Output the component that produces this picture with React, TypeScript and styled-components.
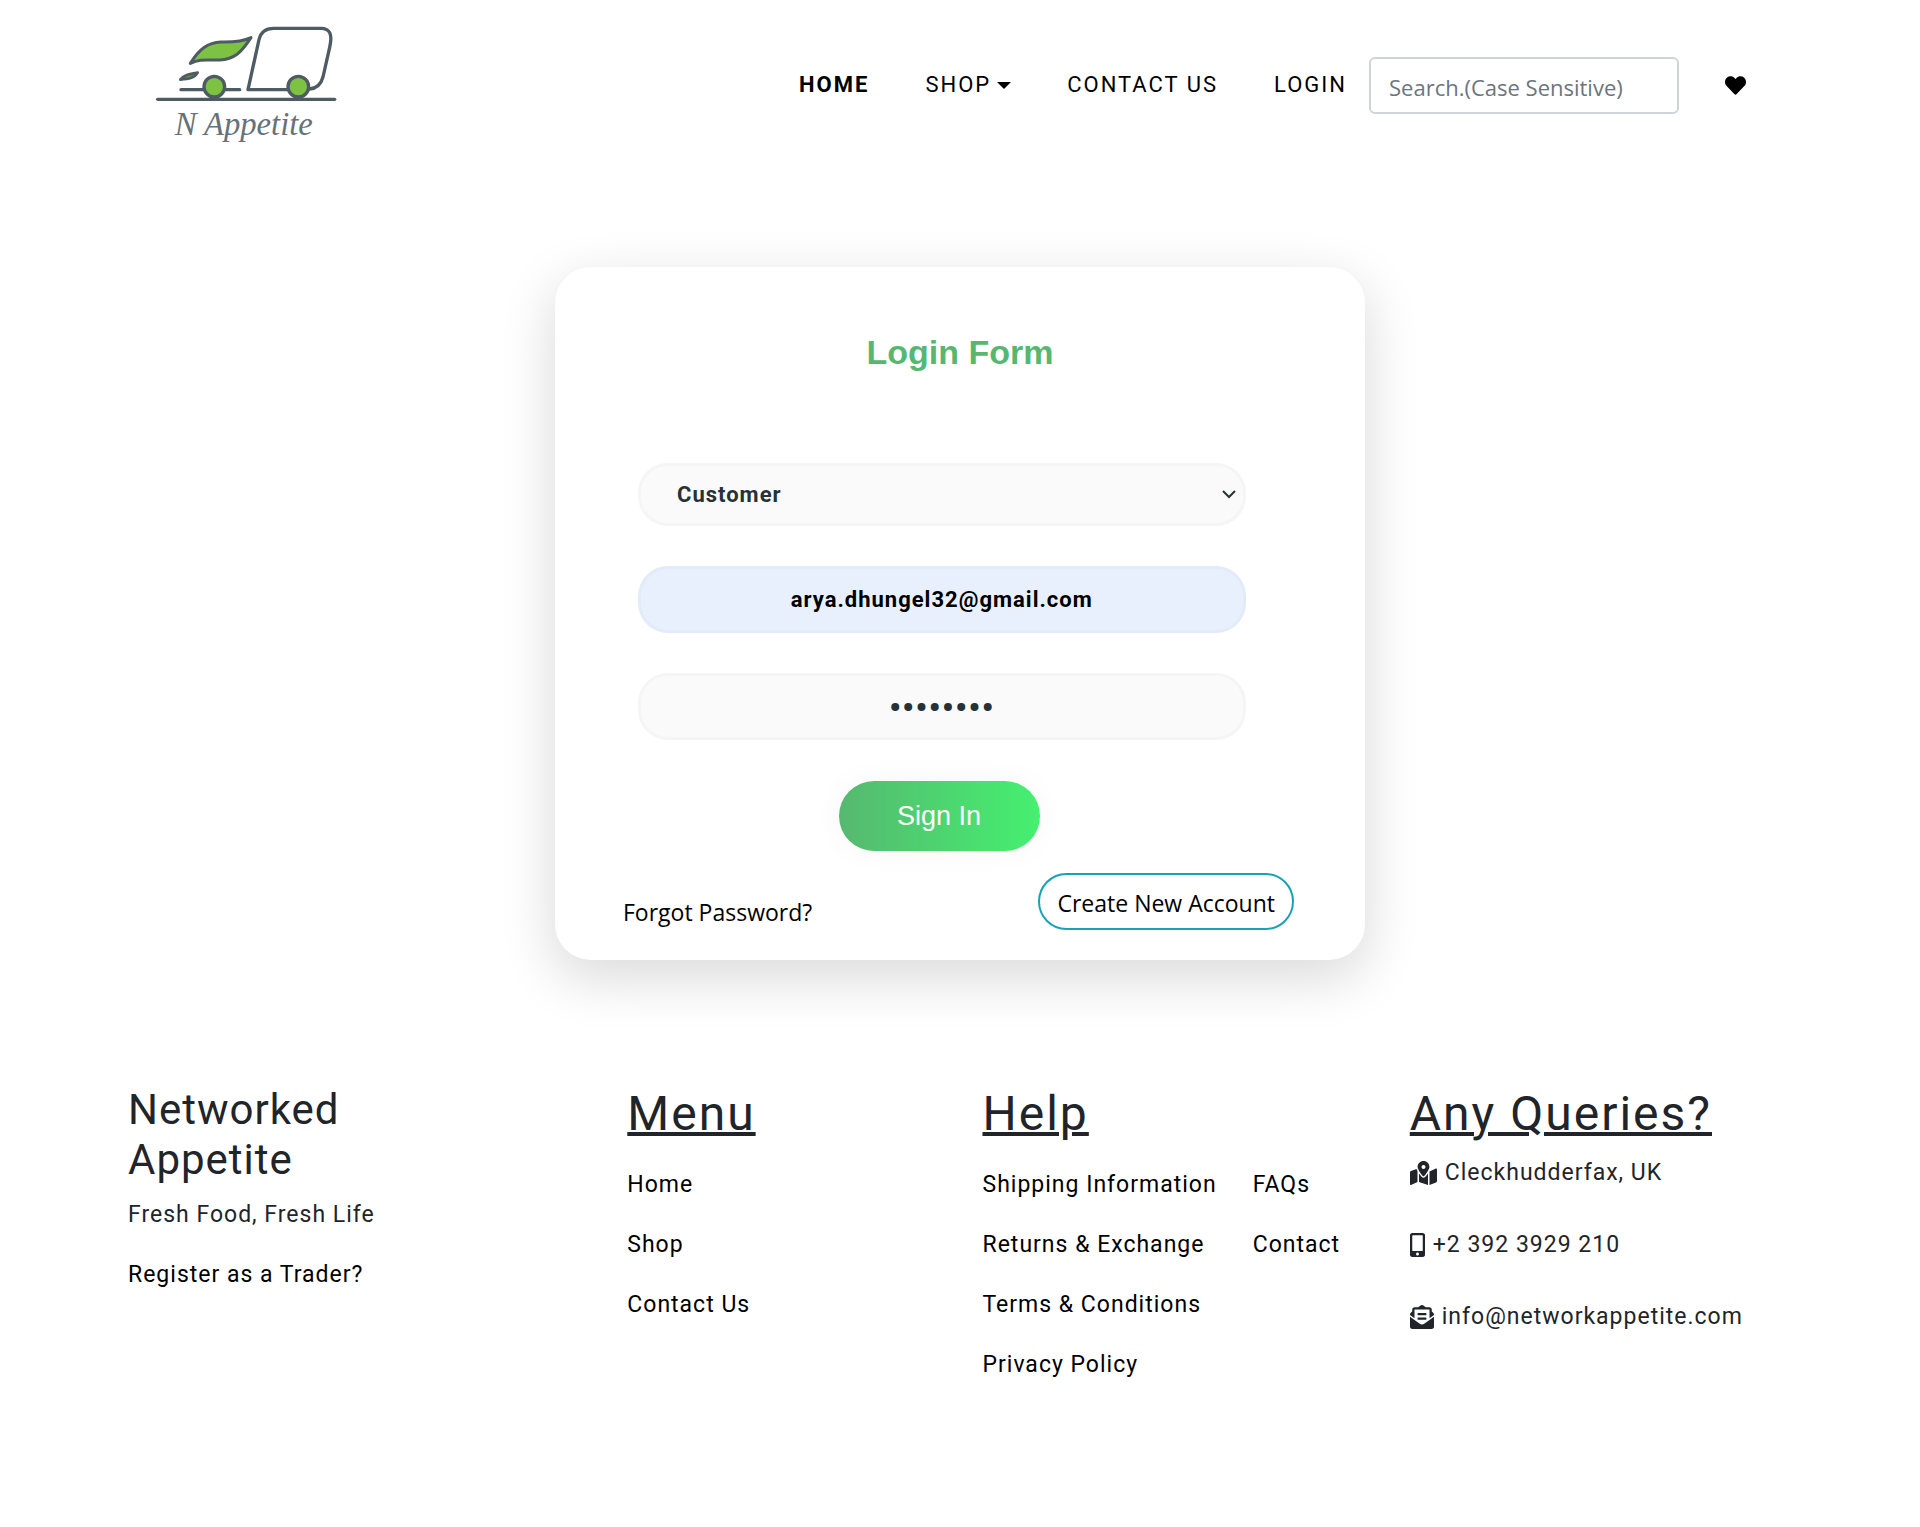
import React, { useState } from "react";
import styled, { createGlobalStyle } from "styled-components";
import {
  FaEnvelopeOpenText,
  FaHeart,
  FaMapMarkedAlt,
  FaMobileAlt,
} from "react-icons/fa";

const displayFont = `Roboto, "Liberation Sans", sans-serif`;
const uiFont = `"Open Sans", "Noto Sans", sans-serif`;
const plainFont = `"Liberation Sans", Arial, sans-serif`;

const GlobalStyle = createGlobalStyle`
  *, *::before, *::after { box-sizing: border-box; }
  body {
    margin: 0;
    background: #fff;
    color: #212529;
    font-family: ${displayFont};
    font-size: 23px;
    line-height: 36px;
    letter-spacing: 1px;
  }
  a { color: #000; text-decoration: none; }
  ul { margin: 0; padding: 0; list-style: none; }
`;

const Header = styled.header`
  display: flex;
  align-items: center;
  justify-content: space-between;
  padding: 10px 174px 10px 140px;
`;

const LogoLink = styled.a`
  display: block;
  svg { display: block; }
`;

const HeaderRight = styled.div`
  display: flex;
  align-items: center;
`;

const NavList = styled.ul`
  display: flex;
  gap: 56px;
`;

const NavLink = styled.a<{ $active?: boolean }>`
  display: flex;
  align-items: center;
  font-size: 22px;
  letter-spacing: 2px;
  text-transform: uppercase;
  font-weight: ${(p) => (p.$active ? 700 : 400)};
`;

const Caret = styled.span`
  margin-left: 6px;
  border-top: 7px solid #000;
  border-left: 7px solid transparent;
  border-right: 7px solid transparent;
`;

const SearchInput = styled.input`
  width: 310px;
  height: 57px;
  margin: 0 46px 0 22px;
  padding: 4px 18px 0;
  border: 2px solid #ced4da;
  border-radius: 6px;
  background: #fff;
  font-family: ${uiFont};
  font-size: 22px;
  color: #495057;
  &::placeholder { color: #6c757d; opacity: 1; }
`;

const HeartLink = styled.a`
  display: flex;
  font-size: 21px;
`;

const Card = styled.main`
  max-width: 810px;
  margin: 97px auto 0;
  padding: 64px 0 30px;
  border-radius: 36px;
  background: #fff;
  box-shadow: 0 17px 53px 3px rgba(0, 0, 0, 0.14);
`;

const Title = styled.h1`
  margin: 0 0 90px;
  text-align: center;
  font-family: ${plainFont};
  font-size: 34px;
  line-height: 42px;
  letter-spacing: normal;
  color: #56b870;
`;

const Fields = styled.div`
  display: grid;
  gap: 40px;
  width: 75%;
  margin-left: 83px;
`;

const SelectBox = styled.div`
  display: grid;
  align-items: center;
  > * { grid-area: 1 / 1; }
  svg {
    justify-self: end;
    margin-right: 10px;
    pointer-events: none;
  }
`;

const fieldStyle = `
  width: 100%;
  border: 3px solid rgba(0, 0, 0, 0.02);
  border-radius: 30px;
  font-family: ${displayFont};
  font-weight: 700;
  letter-spacing: 1px;
  outline: none;
`;

const Select = styled.select`
  ${fieldStyle}
  height: 63px;
  padding: 0 36px;
  appearance: none;
  background: #fafafa;
  color: #263238;
  font-size: 22px;
`;

const Input = styled.input<{ $filled?: boolean }>`
  ${fieldStyle}
  height: 67px;
  padding: 0 36px;
  text-align: center;
  background: ${(p) => (p.$filled ? "#e8f0fe" : "#fafafa")};
  color: ${(p) => (p.$filled ? "#000" : "#263238")};
  font-size: ${(p) => (p.type === "password" ? 34 : 22)}px;
`;

const SignIn = styled.button`
  display: block;
  width: 201px;
  height: 70px;
  margin: 41px 0 0 35%;
  padding: 0;
  border: 0;
  border-radius: 36px;
  background: linear-gradient(to right, #56b870, #45f070);
  box-shadow: 0 0 30px 1px rgba(0, 0, 0, 0.04);
  color: #fff;
  font-family: ${plainFont};
  font-size: 27px;
  cursor: pointer;
`;

const CardFooter = styled.div`
  display: flex;
  align-items: flex-end;
  justify-content: space-between;
  margin-top: 22px;
  padding: 0 71px 0 68px;
  font-family: ${uiFont};
  font-size: 23px;
  letter-spacing: normal;
`;

const CreateLink = styled.a`
  padding: 10px 17px 7px;
  border: 2px solid #17a2b8;
  border-radius: 30px;
`;

const Footer = styled.footer`
  display: grid;
  grid-template-columns: 499fr 355fr 427fr 382fr;
  padding: 125px 128px 120px;
`;

const Brand = styled.h3`
  max-width: 320px;
  margin: 0 0 12px;
  font-size: 42px;
  font-weight: 400;
  line-height: 50px;
`;

const Heading = styled.h2`
  margin: 0 0 12px;
  font-size: 48px;
  font-weight: 400;
  line-height: 58px;
  letter-spacing: 2px;
  text-decoration: underline;
  text-decoration-thickness: 4px;
  white-space: nowrap;
`;

const Tagline = styled.p`
  margin: 0 0 24px;
`;

const Lists = styled.div`
  display: flex;
  gap: 36px;
`;

const LinkItem = styled.li`
  padding: 12px 0;
  white-space: nowrap;
`;

const ContactItem = styled.li<{ $iconWidth: number }>`
  display: flex;
  align-items: center;
  gap: 8px;
  margin-bottom: 36px;
  white-space: nowrap;
  svg {
    flex: none;
    width: ${(p) => p.$iconWidth}px;
    height: 24px;
  }
`;

const Logo = () => (
  <svg width="220" height="150" viewBox="0 0 660 450" role="img" aria-label="N Appetite">
    <g stroke="#4f5b63" strokeWidth="10" strokeLinecap="round" strokeLinejoin="round" fill="none">
      <path d="M53 268H584" />
      <path d="M123 239H299" />
      <path d="M509 237C532 235 543 223 549 201L569 112C578 73 570 55 543 55H400C374 55 362 68 357 89L324 239H446" />
      <path d="M151 160C178 116 203 98 243 96C286 97 310 94 333 83C303 129 283 147 239 150C202 151 181 145 151 160Z" fill="#7dc242" strokeWidth="9" />
      <path d="M121 209C134 193 152 192 173 188C163 205 145 207 121 209Z" fill="#639b3c" strokeWidth="8" />
      <circle cx="223" cy="230" r="31" fill="#7dc242" />
      <circle cx="475" cy="230" r="31" fill="#7dc242" />
    </g>
    <text
      x="104"
      y="374"
      fill="#66727a"
      fontFamily="'Liberation Serif', serif"
      fontStyle="italic"
      fontSize="98"
      letterSpacing="0"
    >
      N Appetite
    </text>
  </svg>
);

const LinkList = ({ items }: { items: string[] }) => (
  <ul>
    {items.map((item) => (
      <LinkItem key={item}>
        <a href="#">{item}</a>
      </LinkItem>
    ))}
  </ul>
);

export default function App() {
  const [role, setRole] = useState("Customer");
  const [email, setEmail] = useState("arya.dhungel32@gmail.com");
  const [password, setPassword] = useState("appetite");

  return (
    <>
      <GlobalStyle />
      <Header>
        <LogoLink href="#">
          <Logo />
        </LogoLink>
        <HeaderRight>
          <nav>
            <NavList>
              <li><NavLink href="#" $active>Home</NavLink></li>
              <li><NavLink href="#">Shop<Caret /></NavLink></li>
              <li><NavLink href="#">Contact Us</NavLink></li>
              <li><NavLink href="#">Login</NavLink></li>
            </NavList>
          </nav>
          <SearchInput type="text" aria-label="Search" placeholder="Search.(Case Sensitive)" />
          <HeartLink href="#" aria-label="Wishlist"><FaHeart /></HeartLink>
        </HeaderRight>
      </Header>

      <Card>
        <Title>Login Form</Title>
        <form onSubmit={(e) => e.preventDefault()}>
          <Fields>
            <SelectBox>
              <Select aria-label="Account type" value={role} onChange={(e) => setRole(e.target.value)}>
                <option>Customer</option>
                <option>Trader</option>
              </Select>
              <svg width="14" height="9" viewBox="0 0 14 9" fill="none" stroke="#263238" strokeWidth="2">
                <path d="M1 1L7 7L13 1" />
              </svg>
            </SelectBox>
            <Input type="email" aria-label="Email" $filled value={email} onChange={(e) => setEmail(e.target.value)} />
            <Input type="password" aria-label="Password" value={password} onChange={(e) => setPassword(e.target.value)} />
          </Fields>
          <SignIn type="submit">Sign In</SignIn>
        </form>
        <CardFooter>
          <a href="#">Forgot Password?</a>
          <CreateLink href="#">Create New Account</CreateLink>
        </CardFooter>
      </Card>

      <Footer>
        <section>
          <Brand>Networked Appetite</Brand>
          <Tagline>Fresh Food, Fresh Life</Tagline>
          <a href="#">Register as a Trader?</a>
        </section>
        <section>
          <Heading>Menu</Heading>
          <LinkList items={["Home", "Shop", "Contact Us"]} />
        </section>
        <section>
          <Heading>Help</Heading>
          <Lists>
            <LinkList
              items={["Shipping Information", "Returns & Exchange", "Terms & Conditions", "Privacy Policy"]}
            />
            <LinkList items={["FAQs", "Contact"]} />
          </Lists>
        </section>
        <section>
          <Heading>Any Queries?</Heading>
          <ul>
            <ContactItem $iconWidth={27}><FaMapMarkedAlt />Cleckhudderfax, UK</ContactItem>
            <ContactItem $iconWidth={15}><FaMobileAlt />+2 392 3929 210</ContactItem>
            <ContactItem $iconWidth={24}><FaEnvelopeOpenText />info@networkappetite.com</ContactItem>
          </ul>
        </section>
      </Footer>
    </>
  );
}
